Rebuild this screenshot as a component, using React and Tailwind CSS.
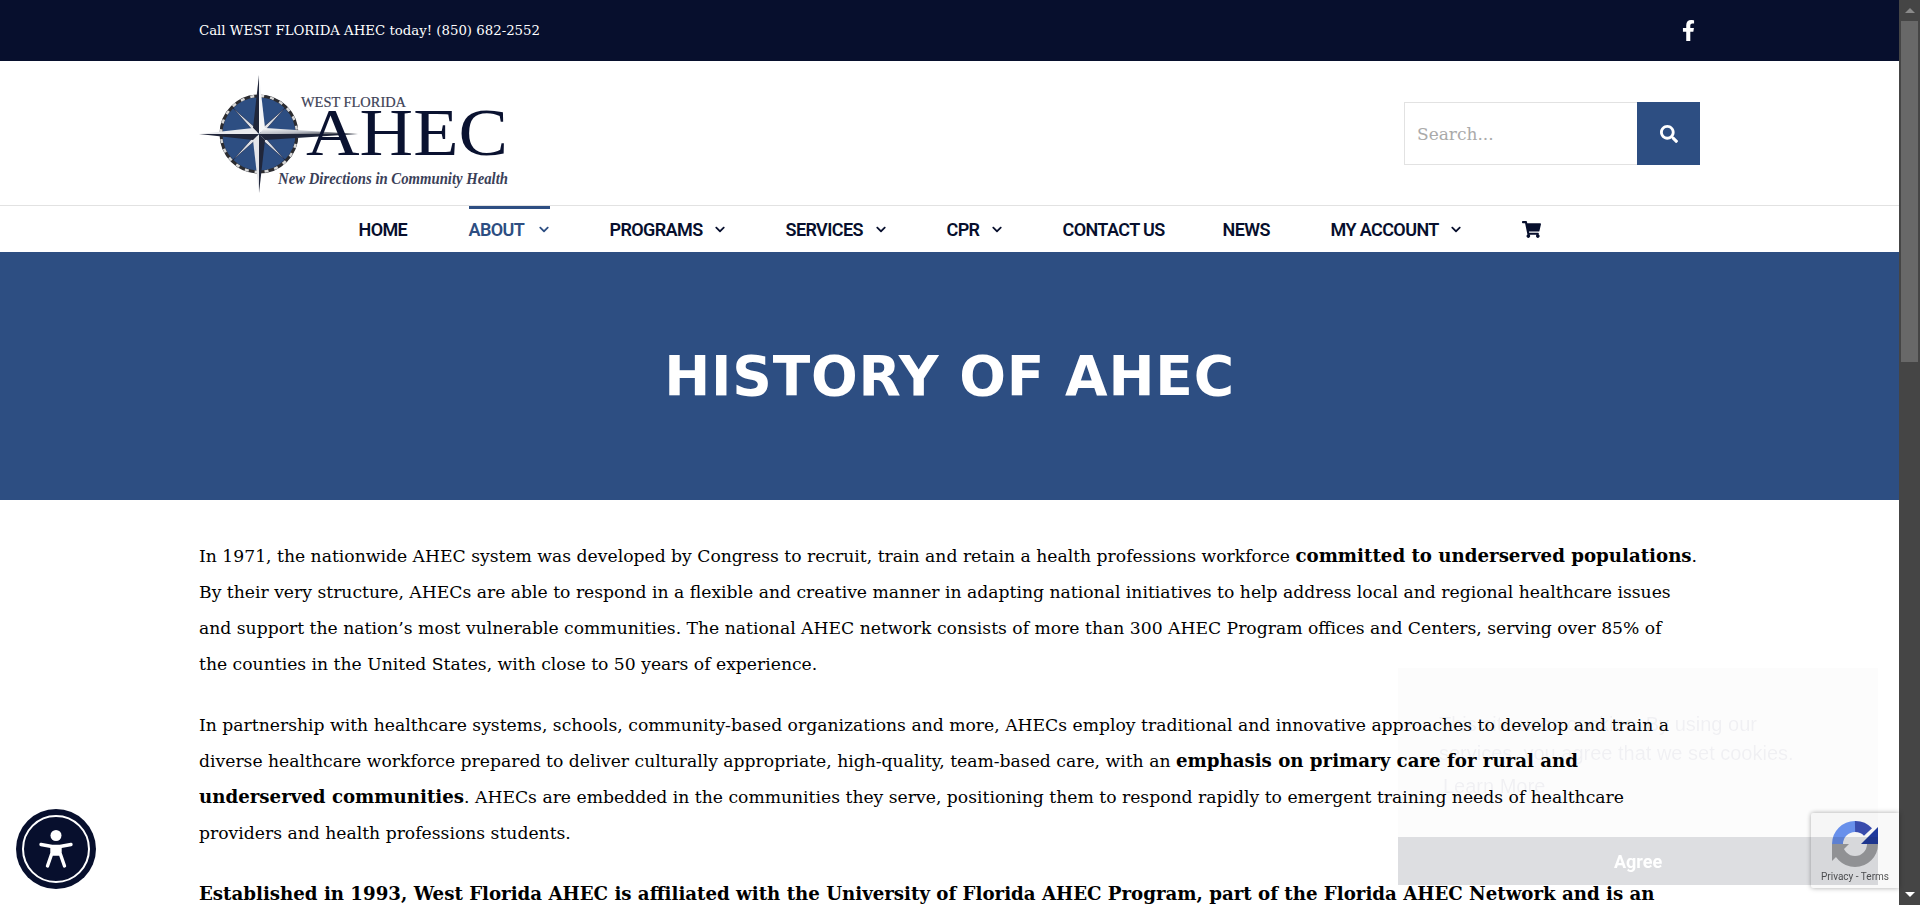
import React from 'react';
import { FaFacebookF, FaSearch, FaShoppingCart, FaChevronDown } from 'react-icons/fa';

const NAV = [
  { label: 'HOME', w: 'w-[50px]' },
  { label: 'ABOUT', w: 'w-[57px]', caret: true, active: true },
  { label: 'PROGRAMS', w: 'w-[92px]', caret: true },
  { label: 'SERVICES', w: 'w-[77px]', caret: true },
  { label: 'CPR', w: 'w-[32px]', caret: true },
  { label: 'CONTACT US', w: 'w-[100px]' },
  { label: 'NEWS', w: 'w-[48px]' },
  { label: 'MY ACCOUNT', w: 'w-[107px]', caret: true },
];

const Logo = () => (
  <svg width="320" height="124" viewBox="0 0 320 124" className="block">
    <defs>
      <linearGradient id="steel" x1="0" y1="0" x2="1" y2="1">
        <stop offset="0" stopColor="#ffffff" />
        <stop offset="0.55" stopColor="#b9bcc4" />
        <stop offset="1" stopColor="#20242f" />
      </linearGradient>
    </defs>
    <g transform="translate(60 59)">
      <circle r="39" fill="#2d4e82" />
      <circle r="38" fill="none" stroke="#2c2c30" strokeWidth="3" />
      <circle r="38" fill="none" stroke="#d8d8d8" strokeWidth="2.5" strokeDasharray="4 6" />
      {/* diagonal points */}
      <g stroke="#0a1230" strokeWidth="0.5">
        <polygon points="0,-3 -26,-26 -3,0" fill="#dfe1e6" />
        <polygon points="0,-3 26,-26 3,0" fill="#dfe1e6" />
        <polygon points="0,3 -26,26 -3,0" fill="#dfe1e6" />
        <polygon points="0,3 26,26 3,0" fill="#dfe1e6" />
      </g>
      {/* long points */}
      <polygon points="0,-59 6,-6 0,0" fill="#f4f5f7" />
      <polygon points="0,-59 -6,-6 0,0" fill="#20263a" />
      <polygon points="0,59 6,6 0,0" fill="#20263a" />
      <polygon points="0,59 -6,6 0,0" fill="#e4e5e9" />
      <polygon points="-60,0 -6,-6 0,0" fill="#e9eaee" />
      <polygon points="-60,0 -6,6 0,0" fill="#20263a" />
      <polygon points="99,0 6,-6 0,0" fill="url(#steel)" />
      <polygon points="99,0 6,6 0,0" fill="#20263a" />
    </g>
    <text x="102" y="32" textLength="105" lengthAdjust="spacingAndGlyphs" fontFamily="Liberation Serif, serif" fontSize="15" fill="#3c4156" stroke="#3c4156" strokeWidth="0.2">WEST FLORIDA</text>
    <text x="107" y="80" textLength="202" lengthAdjust="spacingAndGlyphs" fontFamily="Liberation Serif, serif" fontSize="68" fill="#0a1230">AHEC</text>
    <text x="79" y="109" textLength="230" lengthAdjust="spacingAndGlyphs" fontFamily="Liberation Serif, serif" fontSize="16" fontStyle="italic" fontWeight="700" fill="#3a4058">New Directions in Community Health</text>
  </svg>
);

const RecaptchaMark = () => (
  <svg width="46" height="46" viewBox="0 0 46 46" className="block">
    <path d="M23 5.5 A17.5 17.5 0 0 0 5.5 23" fill="none" stroke="#6a92ee" strokeWidth="11" />
    <path d="M23 5.5 A17.5 17.5 0 0 1 36 11" fill="none" stroke="#3a4db0" strokeWidth="11" />
    <polygon points="46,6 46,23 29,23" fill="#1f3a9e" />
    <path d="M5.5 23 A17.5 17.5 0 0 0 40.5 23" fill="none" stroke="#a6a6a6" strokeWidth="11" />
    <polygon points="0,23 17,23 0,40" fill="#a6a6a6" />
  </svg>
);

const A11yButton = () => (
  <button className="fixed left-[16px] top-[809px] z-20 flex h-[80px] w-[80px] items-center justify-center rounded-full bg-[#070f2d]">
    <span className="flex h-[68px] w-[68px] items-center justify-center rounded-full border-2 border-white">
      <svg width="34" height="40" viewBox="0 0 34 40" className="block">
        <circle cx="17" cy="6.5" r="5.5" fill="#fff" />
        <path d="M2 15.5 L13 17.5 L13 24 L8.5 37 M32 15.5 L21 17.5 L21 24 L25.5 37 M13 17.5 L21 17.5 M13 25 L21 25" fill="none" stroke="#fff" strokeWidth="3.4" strokeLinecap="round" strokeLinejoin="round" />
        <rect x="13" y="17" width="8" height="9" fill="#fff" />
      </svg>
    </span>
  </button>
);

const CookieNotice = () => (
  <div className="fixed left-[1398px] top-[668px] z-30 flex h-[217px] w-[480px] flex-col justify-between bg-black/[0.01]">
    <div className="pl-[41px] pt-[42px] font-['Liberation_Sans',sans-serif] text-[20px] leading-[29px] text-[#1f2a5a]/[0.06]">
      <p>This site uses cookies. By using our</p>
      <p>services, you agree that we set cookies.</p>
      <p className="pl-[4px] pt-[4px]">Learn More</p>
    </div>
    <button className="h-[48px] w-full bg-[#1e233c]/[0.14] font-['Roboto',sans-serif] text-[18px] font-bold text-white">Agree</button>
  </div>
);

const RecaptchaBadge = () => (
  <div className="fixed left-[1811px] top-[813px] z-10 flex h-[75px] w-[88px] flex-col items-center rounded-l-[2px] bg-[#f9f9f9] pt-[8px] shadow-[0_0_5px_rgba(0,0,0,0.35)]">
    <RecaptchaMark />
    <p className="mt-[3px] whitespace-nowrap font-['Roboto',sans-serif] text-[10px] leading-[14px] text-[#555]">Privacy - Terms</p>
  </div>
);

const Scrollbar = () => (
  <div className="flex h-[905px] w-[21px] flex-col items-center justify-between bg-[#454545]">
    <div className="flex w-full flex-col items-center">
      <div className="flex h-[21px] items-center justify-center">
        <span className="h-0 w-0 border-x-[5px] border-b-[5px] border-x-transparent border-b-[#8a8a8a]" />
      </div>
      <div className="h-[341px] w-[17px] bg-[#686868]" />
    </div>
    <div className="flex h-[21px] items-center justify-center">
      <span className="h-0 w-0 border-x-[5px] border-t-[5px] border-x-transparent border-t-white" />
    </div>
  </div>
);

const B = ({ children }) => <strong className="text-[18.2px]">{children}</strong>;

export default function App() {
  return (
    <div className="flex h-[905px] w-[1920px] overflow-hidden bg-white font-['DejaVu_Serif',serif] text-black">
      <div className="h-[905px] w-[1899px] overflow-hidden">
        {/* TOP BAR */}
        <div className="h-[61px] bg-[#070f2d] text-white">
          <div className="mx-auto flex h-full w-[1501px] items-center justify-between">
            <p className="text-[13.3px]">Call WEST FLORIDA AHEC today! (850) 682-2552</p>
            <FaFacebookF className="mr-[5px] h-[21px] w-[13px]" />
          </div>
        </div>

        {/* LOGO + SEARCH */}
        <div className="h-[145px] border-b border-[#e2e2e2]">
          <div className="mx-auto flex h-full w-[1501px] justify-between">
            <div className="pt-[14px]"><Logo /></div>
            <form className="mt-[41px] flex h-[63px] w-[296px]">
              <div className="flex flex-1 items-center border border-r-0 border-[#e2e2e2] pl-[12px] pt-[2px] text-[17px] text-[#aaaaaa]">Search...</div>
              <button type="button" className="flex w-[63px] items-center justify-center bg-[#2d4e82] text-white">
                <FaSearch className="h-[18px] w-[18px]" />
              </button>
            </form>
          </div>
        </div>

        {/* NAV */}
        <nav className="flex h-[46px] items-stretch justify-center gap-[60px] font-['Roboto',sans-serif] text-[18px] font-semibold text-[#070f2d]">
          {NAV.map(item => (
            <a key={item.label} className={`flex items-center gap-[12px] ${item.active ? 'border-t-[3px] border-[#2d4e82] pb-[3px] text-[#2d4e82]' : ''}`}>
              <span className={`${item.w} whitespace-nowrap tracking-[-0.6px]`}>{item.label}</span>
              {item.caret && <FaChevronDown className="h-[11px] w-[12px]" />}
            </a>
          ))}
          <a className="flex items-center"><FaShoppingCart className="h-[17px] w-[19px]" /></a>
        </nav>

        {/* TITLE */}
        <div className="flex h-[248px] items-center justify-center bg-[#2d4e82]">
          <h1 className="font-['DejaVu_Sans',sans-serif] text-[55px] font-bold tracking-[0.8px] text-white">HISTORY OF AHEC</h1>
        </div>

        {/* BODY */}
        <div className="mx-auto w-[1501px] whitespace-nowrap pt-[38px] text-[17.2px] leading-[36px]">
          <p className="mb-[25px]">
            In 1971, the nationwide AHEC system was developed by Congress to recruit, train and retain a health professions workforce <B>committed to underserved populations</B>.<br />
            By their very structure, AHECs are able to respond in a flexible and creative manner in adapting national initiatives to help address local and regional healthcare issues<br />
            and support the nation’s most vulnerable communities. The national AHEC network consists of more than 300 AHEC Program offices and Centers, serving over 85% of<br />
            the counties in the United States, with close to 50 years of experience.
          </p>
          <p className="mb-[25px]">
            In partnership with healthcare systems, schools, community-based organizations and more, AHECs employ traditional and innovative approaches to develop and train a<br />
            diverse healthcare workforce prepared to deliver culturally appropriate, high-quality, team-based care, with an <B>emphasis on primary care for rural and</B><br />
            <B>underserved communities</B>. AHECs are embedded in the communities they serve, positioning them to respond rapidly to emergent training needs of healthcare<br />
            providers and health professions students.
          </p>
          <p>
            <B>Established in 1993, West Florida AHEC is affiliated with the University of Florida AHEC Program, part of the Florida AHEC Network and is an</B>
          </p>
        </div>
      </div>
      <Scrollbar />
      <A11yButton />
      <RecaptchaBadge />
      <CookieNotice />
    </div>
  );
}
